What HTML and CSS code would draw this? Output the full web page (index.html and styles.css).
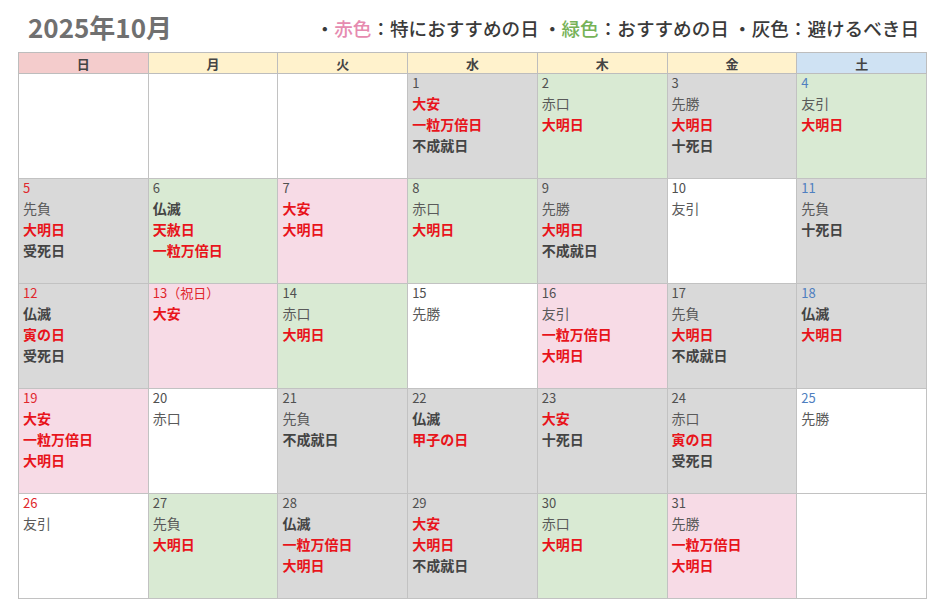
FILE: index.html
```html
<!DOCTYPE html>
<html lang="ja">
<head>
<meta charset="utf-8">
<link rel="stylesheet" href="styles.css">
</head>
<body>
<div class="page">
  <div class="top">
    <h1 class="title">2025年10月</h1>
    <div class="legend">・<span class="pk">赤色</span>：特におすすめの日 ・<span class="gr">緑色</span>：おすすめの日 ・灰色：避けるべき日</div>
  </div>
  <div class="cal">
    <div class="hd sun">日</div><div class="hd wk">月</div><div class="hd wk">火</div><div class="hd wk">水</div><div class="hd wk">木</div><div class="hd wk">金</div><div class="hd sat">土</div>

    <div class="c w"></div>
    <div class="c w"></div>
    <div class="c w"></div>
    <div class="c g"><span class="d">1</span><span class="r">大安</span><span class="r">一粒万倍日</span><span class="k">不成就日</span></div>
    <div class="c n"><span class="d">2</span><span class="m">赤口</span><span class="r">大明日</span></div>
    <div class="c g"><span class="d">3</span><span class="m">先勝</span><span class="r">大明日</span><span class="k">十死日</span></div>
    <div class="c n"><span class="d blue">4</span><span class="m">友引</span><span class="r">大明日</span></div>

    <div class="c g"><span class="d red">5</span><span class="m">先負</span><span class="r">大明日</span><span class="k">受死日</span></div>
    <div class="c n"><span class="d">6</span><span class="k">仏滅</span><span class="r">天赦日</span><span class="r">一粒万倍日</span></div>
    <div class="c p"><span class="d">7</span><span class="r">大安</span><span class="r">大明日</span></div>
    <div class="c n"><span class="d">8</span><span class="m">赤口</span><span class="r">大明日</span></div>
    <div class="c g"><span class="d">9</span><span class="m">先勝</span><span class="r">大明日</span><span class="k">不成就日</span></div>
    <div class="c w"><span class="d">10</span><span class="m">友引</span></div>
    <div class="c g"><span class="d blue">11</span><span class="m">先負</span><span class="k">十死日</span></div>

    <div class="c g"><span class="d red">12</span><span class="k">仏滅</span><span class="r">寅の日</span><span class="k">受死日</span></div>
    <div class="c p"><span class="d red">13（祝日）</span><span class="r">大安</span></div>
    <div class="c n"><span class="d">14</span><span class="m">赤口</span><span class="r">大明日</span></div>
    <div class="c w"><span class="d">15</span><span class="m">先勝</span></div>
    <div class="c p"><span class="d">16</span><span class="m">友引</span><span class="r">一粒万倍日</span><span class="r">大明日</span></div>
    <div class="c g"><span class="d">17</span><span class="m">先負</span><span class="r">大明日</span><span class="k">不成就日</span></div>
    <div class="c g"><span class="d blue">18</span><span class="k">仏滅</span><span class="r">大明日</span></div>

    <div class="c p"><span class="d red">19</span><span class="r">大安</span><span class="r">一粒万倍日</span><span class="r">大明日</span></div>
    <div class="c w"><span class="d">20</span><span class="m">赤口</span></div>
    <div class="c g"><span class="d">21</span><span class="m">先負</span><span class="k">不成就日</span></div>
    <div class="c g"><span class="d">22</span><span class="k">仏滅</span><span class="r">甲子の日</span></div>
    <div class="c g"><span class="d">23</span><span class="r">大安</span><span class="k">十死日</span></div>
    <div class="c g"><span class="d">24</span><span class="m">赤口</span><span class="r">寅の日</span><span class="k">受死日</span></div>
    <div class="c w"><span class="d blue">25</span><span class="m">先勝</span></div>

    <div class="c w"><span class="d red">26</span><span class="m">友引</span></div>
    <div class="c n"><span class="d">27</span><span class="m">先負</span><span class="r">大明日</span></div>
    <div class="c g"><span class="d">28</span><span class="k">仏滅</span><span class="r">一粒万倍日</span><span class="r">大明日</span></div>
    <div class="c g"><span class="d">29</span><span class="r">大安</span><span class="r">大明日</span><span class="k">不成就日</span></div>
    <div class="c n"><span class="d">30</span><span class="m">赤口</span><span class="r">大明日</span></div>
    <div class="c p"><span class="d">31</span><span class="m">先勝</span><span class="r">一粒万倍日</span><span class="r">大明日</span></div>
    <div class="c w"></div>
  </div>
</div>
</body>
</html>
```

FILE: styles.css
```css
* { box-sizing: border-box; }
html, body { margin: 0; padding: 0; background: #fff; }
body { font-family: "Noto Sans CJK JP", "Noto Sans", sans-serif; color: #444; }

.page { padding: 0 0 0 18px; width: 944px; }

.top {
  display: flex;
  justify-content: space-between;
  align-items: center;
  height: 52px;
  width: 909px;
  padding: 0 8px 0 10px;
}
.title {
  margin: 0;
  font-size: 26px;
  font-weight: 700;
  color: #707070;
  line-height: 1;
  letter-spacing: 0;
  position: relative;
  top: 1px;
}
.legend {
  font-size: 18.6px;
  font-weight: 500;
  color: #3a3a3a;
  line-height: 1;
  position: relative;
  top: 2px;
}
.legend .pk { color: #e68bb0; }
.legend .gr { color: #76b257; }

.cal {
  display: grid;
  grid-template-columns: repeat(7, 1fr);
  grid-template-rows: 21px repeat(5, 105px);
  width: 909px;
  border-top: 1px solid #bdbdbd;
  border-left: 1px solid #bdbdbd;
}
.hd {
  border-right: 1px solid #bdbdbd;
  border-bottom: 1px solid #bdbdbd;
  font-size: 13px;
  font-weight: 700;
  color: #444;
  display: flex;
  align-items: center;
  justify-content: center;
}
.hd.sun { background: #f4cccc; }
.hd.wk { background: #fff2cc; }
.hd.sat { background: #cfe2f3; }

.c {
  border-right: 1.5px solid #c2c2c2;
  border-bottom: 1.5px solid #c2c2c2;
  padding: 0 4px;
  display: flex;
  flex-direction: column;
  font-size: 14px;
  line-height: 21px;
}
.c.w { background: #ffffff; }
.c.g { background: #d9d9d9; }
.c.n { background: #d9ead3; }
.c.p { background: #f7dbe6; }

.d { font-size: 13px; color: #505050; margin-top: -2px; }
.d.red { color: #e0262c; }
.d.blue { color: #4f7fc0; }
.m { color: #5a5a5a; font-weight: 400; }
.r { color: #e8141b; font-weight: 700; }
.k { color: #444; font-weight: 700; }
```
